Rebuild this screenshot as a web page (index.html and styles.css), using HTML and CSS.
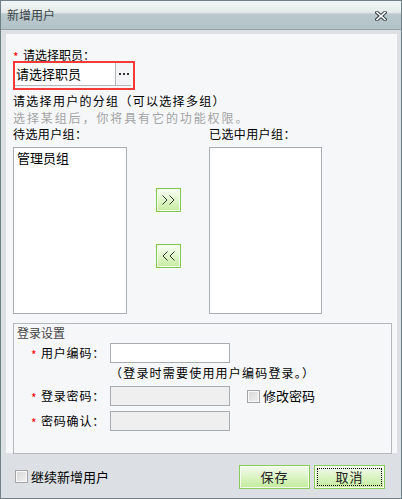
FILE: index.html
```html
<!DOCTYPE html>
<html lang="zh-CN">
<head>
    <meta charset="UTF-8">
    <title>新增用户</title>
    <link rel="stylesheet" href="styles.css">
</head>
<body>
    <div class="dialog">
        <div class="titlebar">
            <span class="title">新增用户</span>
            <svg class="close" width="12" height="10" viewBox="0 0 12 10">
                <path d="M2 1.5 L10 8.5 M10 1.5 L2 8.5" stroke="#3a4448" stroke-width="3.6" stroke-linecap="square" fill="none"/>
                <path d="M2 1.5 L10 8.5 M10 1.5 L2 8.5" stroke="#ffffff" stroke-width="1.6" stroke-linecap="square" fill="none"/>
            </svg>
        </div>
        <div class="dialog-body">
            <div class="panel">
                <div class="field-label"><span class="req">*</span>请选择职员：</div>
                <div class="picker-box">
                    <div class="picker">
                        <span class="picker-input">请选择职员</span>
                        <span class="picker-btn">
                            <svg width="12" height="4" viewBox="0 0 12 4">
                                <rect x="1" y="1" width="2" height="2" fill="#333"/>
                                <rect x="5" y="1" width="2" height="2" fill="#333"/>
                                <rect x="9" y="1" width="2" height="2" fill="#333"/>
                            </svg>
                        </span>
                    </div>
                </div>
                <div class="group-title">请选择用户的分组（可以选择多组）</div>
                <div class="group-hint">选择某组后，你将具有它的功能权限。</div>
                <div class="groups">
                    <div class="col-label">待选用户组：</div>
                    <div></div>
                    <div class="col-label">已选中用户组：</div>
                    <div class="list">
                        <div class="list-item">管理员组</div>
                    </div>
                    <div class="mover">
                        <button class="move-btn">
                            <svg width="23" height="22" viewBox="0 0 23 22">
                                <path d="M5.5 6.5 L10 11 L5.5 15.5 M12.5 6.5 L17 11 L12.5 15.5" stroke="#333" stroke-width="1" fill="none"/>
                            </svg>
                        </button>
                        <button class="move-btn">
                            <svg width="23" height="22" viewBox="0 0 23 22">
                                <path d="M10.5 6.5 L6 11 L10.5 15.5 M17.5 6.5 L13 11 L17.5 15.5" stroke="#333" stroke-width="1" fill="none"/>
                            </svg>
                        </button>
                    </div>
                    <div class="list"></div>
                </div>
                <div class="login-box">
                    <div class="box-title">登录设置</div>
                    <div class="form-row first">
                        <span class="row-label"><span class="req">*</span>用户编码：</span>
                        <span class="text-input"></span>
                    </div>
                    <div class="form-hint">（登录时需要使用用户编码登录。）</div>
                    <div class="form-row">
                        <span class="row-label"><span class="req">*</span>登录密码：</span>
                        <span class="text-input disabled"></span>
                        <span class="checkbox pwd-check"></span>
                        <span class="check-label">修改密码</span>
                    </div>
                    <div class="form-row second">
                        <span class="row-label"><span class="req">*</span>密码确认：</span>
                        <span class="text-input disabled"></span>
                    </div>
                </div>
            </div>
            <div class="footer">
                <span class="checkbox"></span>
                <span class="check-label">继续新增用户</span>
                <button class="action-btn save">保存</button>
                <button class="action-btn cancel">取消</button>
            </div>
        </div>
    </div>
</body>
</html>
```

FILE: styles.css
```css
/* 对话框样式 */
body {
    margin: 0;
    background-color: #dce0e4;
}
.dialog {
    width: 402px;
    height: 499px;
    box-sizing: border-box;
    border: 1px solid #6f8086;
    display: flex;
    flex-direction: column;
    font-family: "Noto Sans CJK SC", sans-serif;
    font-size: 12px;
    color: #000;
}
.titlebar {
    height: 28px;
    border-bottom: 1px solid #94a4a9;
    background: linear-gradient(#f4f6f6 0, #e4eaeb 40%, #b9c8cc 48%, #b3c3c7 100%);
    display: flex;
    align-items: center;
    justify-content: space-between;
    padding: 0 14px 0 6px;
}
.title {
    color: #3c4448;
    font-size: 12px;
    line-height: 14px;
}
.close {
    display: block;
    margin-top: 2px;
}
.dialog-body {
    flex: 1;
    background-color: #dce0e4;
    padding: 4px 4px 0 5px;
    display: flex;
    flex-direction: column;
}
.panel {
    height: 419px;
    box-sizing: border-box;
    background-color: #f6f7f9;
    padding: 14px 5px 0 7px;
}
.req {
    display: inline-block;
    width: 10px;
    color: #f00;
    vertical-align: -2px;
}
.field-label {
    line-height: 14px;
    height: 13px;
}
.picker-box {
    width: 122px;
    height: 29px;
    box-sizing: border-box;
    border: 2px solid #f63a3a;
}
.picker {
    display: flex;
    width: 116px;
    height: 22px;
    border-bottom: 1px solid #b4b8bc;
}
.picker-input {
    width: 99px;
    padding-left: 1px;
    background-color: #fff;
    font-size: 13px;
    line-height: 22px;
}
.picker-btn {
    width: 15px;
    border-left: 1px solid #b4b8bc;
    background-color: #f3f4f5;
    display: flex;
    align-items: center;
    justify-content: center;
}
.group-title {
    margin-top: 2px;
    line-height: 17px;
    letter-spacing: 1.3px;
}
.group-hint {
    line-height: 17px;
    color: #a3a3a3;
    letter-spacing: 1.9px;
}
.groups {
    margin-top: 1px;
    display: grid;
    grid-template-columns: 114px 82px 113px;
    grid-template-rows: 20px 167px;
}
.col-label {
    line-height: 14px;
    letter-spacing: 0.4px;
}
.list {
    background-color: #fff;
    border: 1px solid #a9adb1;
    box-sizing: border-box;
}
.list-item {
    padding: 3px 3px;
    line-height: 14px;
    font-size: 13px;
}
.mover {
    display: flex;
    flex-direction: column;
    align-items: center;
    padding-top: 41px;
    gap: 32px;
}
.move-btn {
    width: 25px;
    height: 24px;
    box-sizing: border-box;
    padding: 0;
    border: 1px solid #80c850;
    box-shadow: inset 0 0 0 1px #f4fbee;
    background: linear-gradient(#fbfff6, #c5ed9e);
    display: flex;
    align-items: center;
    justify-content: center;
}
.login-box {
    margin-top: 9px;
    height: 131px;
    box-sizing: border-box;
    border: 1px solid #b4b8bc;
    padding: 2px 4px 0 3px;
}
.box-title {
    line-height: 14px;
    color: #444;
}
.form-row {
    display: flex;
    align-items: center;
    height: 20px;
}
.form-row.first {
    margin-top: 3px;
}
.form-row.second {
    margin-top: 5px;
}
.row-label {
    width: 79px;
    padding-left: 14px;
    letter-spacing: 0.8px;
}
.text-input {
    width: 120px;
    height: 20px;
    box-sizing: border-box;
    border: 1px solid #a9adb1;
    background-color: #fff;
}
.text-input.disabled {
    background-color: #efefef;
}
.form-hint {
    height: 23px;
    line-height: 20px;
    padding-left: 93px;
    letter-spacing: 1.2px;
}
.checkbox {
    width: 13px;
    height: 13px;
    box-sizing: border-box;
    border: 1px solid #a4a4a4;
    box-shadow: inset 0 0 0 1px #f8f8f8;
    background: linear-gradient(135deg, #d6d6d6, #f2f2f2);
}
.pwd-check {
    margin-left: 17px;
}
.check-label {
    margin-left: 3px;
    font-size: 13px;
    line-height: 14px;
}
.footer {
    height: 45px;
    box-sizing: border-box;
    padding: 2px 12px 0 9px;
    display: flex;
    align-items: center;
}
.action-btn {
    width: 71px;
    height: 24px;
    box-sizing: border-box;
    padding: 0;
    border: 1px solid #8acd5a;
    box-shadow: inset 0 0 0 1px #f6fbf0;
    background: linear-gradient(#f5fbef, #c2eb9b);
    font-family: "Noto Sans CJK SC", sans-serif;
    font-size: 13px;
    letter-spacing: 1px;
    color: #222;
}
.save {
    margin-left: auto;
}
.cancel {
    margin-left: 4px;
    outline: 1px dotted #000;
    outline-offset: -4px;
}
```
